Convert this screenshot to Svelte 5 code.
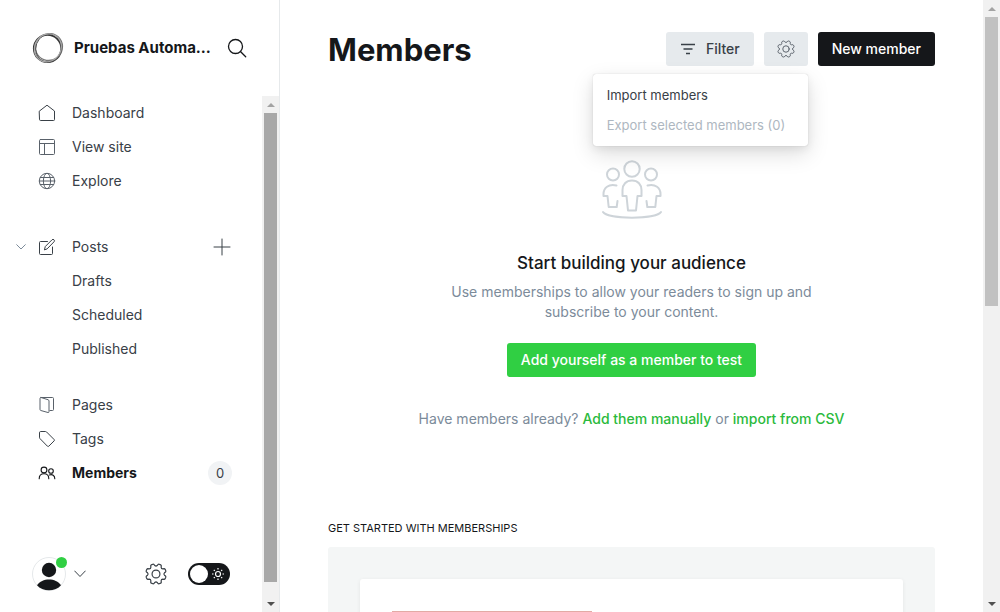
<script>
  const teeth = 8;
  const point = (radius, degrees) => {
    const angle = (degrees * Math.PI) / 180;
    return `${(12 + radius * Math.sin(angle)).toFixed(2)} ${(12 - radius * Math.cos(angle)).toFixed(2)}`;
  };
  const gearPath =
    Array.from({ length: teeth }, (_, i) => {
      const a = i * 45;
      return `${i ? 'L' : 'M'}${point(9.3, a - 8)} Q${point(8, a)} ${point(9.3, a + 8)} L${point(10.6, a + 12)} Q${point(11.2, a + 14)} ${point(11.2, a + 18)} L${point(11.2, a + 27)} Q${point(11.2, a + 31)} ${point(10.6, a + 33)}`;
    }).join(' ') + 'Z';

  const sections = [
    [
      { label: 'Dashboard', icon: 'home' },
      { label: 'View site', icon: 'layout' },
      { label: 'Explore', icon: 'globe' }
    ],
    [
      { label: 'Posts', icon: 'edit', expandable: true },
      { label: 'Drafts' },
      { label: 'Scheduled' },
      { label: 'Published' }
    ],
    [
      { label: 'Pages', icon: 'pages' },
      { label: 'Tags', icon: 'tag' },
      { label: 'Members', icon: 'members', active: true, count: 0 }
    ]
  ];
  let night = $state(false);
</script>

{#snippet gear(size)}
  <svg width={size} height={size} viewBox="0 0 24 24" class="line gear" aria-hidden="true">
    <path d={gearPath} /><circle cx="12" cy="12" r="4.3" />
  </svg>
{/snippet}

{#snippet navIcon(name)}
  <svg width="18" height="18" viewBox="0 0 18 18" class="line {name}" aria-hidden="true">
    {#if name === 'home'}
      <path d="M1.5 7 9 1.2 16.5 7v8.6q0 .9-.9.9H2.4q-.9 0-.9-.9z" />
    {:else if name === 'layout'}
      <rect x="1.5" y="1.5" width="15" height="15" rx="1" /><path d="M1.5 5.5h15M6.5 5.5v11" />
    {:else if name === 'globe'}
      <circle cx="9" cy="9" r="7.7" /><ellipse cx="9" cy="9" rx="3.6" ry="7.7" /><path d="M2.3 5.5h13.4M1.3 9h15.4M2.3 12.5h13.4" />
    {:else if name === 'edit'}
      <path d="M9.5 3.5h-7q-1 0-1 1v11q0 1 1 1h11q1 0 1-1V9" /><path d="m6.500 11.500.8-3L14 1.800q1-1 2 0t0 2L9.400 10.600z" />
    {:else if name === 'pages'}
      <path d="M3 1.500h11.500q1 0 1 1v11q0 1-1 1H12M3 1.500q-1 0-1 1v11q0 .8.800 1l7.200 2q1 .2 1-.8V5q0-1-1-1.300L3 1.500" />
    {:else if name === 'tag'}
      <path d="M1.500 2.500q0-1 1-1h5q.6 0 1 .4l7.600 7.600q.7.700 0 1.400l-5.300 5.300q-.7.700-1.400 0L1.900 8.500q-.4-.4-.4-1z" />
    {:else}
      <circle cx="6" cy="6" r="2.9" /><circle cx="13" cy="7" r="2.3" /><path d="M1.200 14.700c0-3 1.900-5 4.800-5s4.800 2 4.800 5M11.300 11c3-1.200 5.500.5 5.500 3.700" />
    {/if}
  </svg>
{/snippet}

<div class="app">
  <aside>
    <header class="brand">
      <svg width="32" height="32" viewBox="0 0 32 32" fill="none" aria-hidden="true">
        <circle cx="15.5" cy="16.5" r="13.7" stroke="#333" stroke-width="1.8" />
        <ellipse cx="17" cy="15.3" rx="13.7" ry="13.3" stroke="#777" stroke-width="1.3" transform="rotate(-35 16.5 15.3)" />
        <ellipse cx="16.7" cy="16" rx="12.8" ry="14.4" stroke="#555" stroke-width=".9" transform="rotate(20 16.7 16)" />
        <ellipse cx="16.5" cy="16" rx="14.5" ry="13" stroke="#aaa" stroke-width="1.2" transform="rotate(-55 16 16.5)" />
      </svg>
      <strong>Pruebas Automa...</strong>
      <button class="plain" aria-label="Search">
        <svg width="20" height="20" viewBox="0 0 20 20" class="line dark" aria-hidden="true"><circle cx="8.5" cy="8.5" r="7" /><path d="m13.7 13.7 5 5" /></svg>
      </button>
    </header>
    <div class="side-body">
      <div class="side-content">
        <nav>
          {#each sections as items}
            <ul>
              {#each items as item}
                <li>
                  <span class="toggle">
                    {#if item.expandable}
                      <button class="plain" aria-label="Collapse posts"><svg width="10" height="6" viewBox="0 0 10 6" class="line pale" aria-hidden="true"><path d="m.7.7 4.3 4.3L9.3.7" /></svg></button>
                    {/if}
                  </span>
                  <a href="#{item.label}" class:active={item.active}>
                    <span class="icon">{#if item.icon}{@render navIcon(item.icon)}{/if}</span>
                    {item.label}
                  </a>
                  {#if item.expandable}
                    <button class="plain" aria-label="New post"><svg width="20" height="20" viewBox="0 0 20 20" class="line" aria-hidden="true"><path d="M10 2v16M2 10h16" /></svg></button>
                  {/if}
                  {#if item.active}<span class="count">{item.count}</span>{/if}
                </li>
              {/each}
            </ul>
          {/each}
        </nav>
        <footer>
          <button class="plain account" aria-label="Account">
            <span class="avatar">
              <svg width="34" height="34" viewBox="0 0 34 34" aria-hidden="true"><circle cx="17" cy="17" r="16.5" fill="#fff" stroke="#e5e8ea" /><circle cx="17" cy="13" r="7.2" fill="#15171a" /><path d="M5 28.300c5-7.700 19-7.700 24 0-5.500 6.600-18.500 6.600-24 0z" fill="#15171a" /></svg>
              <i></i>
            </span>
            <svg width="12" height="8" viewBox="0 0 12 8" class="line" aria-hidden="true"><path d="m.7 1 5.300 5.500L11.300 1" /></svg>
          </button>
          <button class="plain settings" aria-label="Settings">{@render gear(22)}</button>
          <label class="switch">
            <input type="checkbox" bind:checked={night} aria-label="Night mode" />
            <svg width="14" height="14" viewBox="0 0 14 14" aria-hidden="true"><circle cx="7" cy="7" r="2.500" /><path d="M7 1v1.500M7 11.500V13M1 7h1.500M11.500 7H13M2.800 2.800l1 1M10.200 10.200l1 1M11.200 2.800l-1 1M3.800 10.200l-1 1" /></svg>
          </label>
        </footer>
      </div>
      <div class="scrollbar side-scroll" aria-hidden="true"><b class="up"></b><span></span><b class="down"></b></div>
    </div>
  </aside>

  <main>
    <header class="top">
      <h1>Members</h1>
      <div class="actions">
        <button class="btn gray"><svg width="16" height="12" viewBox="0 0 16 12" class="bars" aria-hidden="true"><path d="M1 1.500h14M3.500 6h9M6 10.500h4" /></svg>Filter</button>
        <div class="menu-wrap">
          <button class="btn gray" aria-label="Member actions">{@render gear(18)}</button>
          <div class="menu">
            <button>Import members</button>
            <button disabled>Export selected members (0)</button>
          </div>
        </div>
        <button class="btn black">New member</button>
      </div>
    </header>
    <section class="empty">
      <svg width="60" height="60" viewBox="0 0 60 60" class="people" aria-hidden="true">
        <circle cx="30" cy="9" r="7.7" /><circle cx="11" cy="14.5" r="6" /><circle cx="49" cy="14.5" r="6" />
        <path d="M30 20.500c-6 0-9.500 4-9.500 9.500v6h4l1.500 14.500h8L35.500 36h4v-6c0-5.500-3.500-9.500-9.500-9.500z" />
        <path d="M14.500 25.500C6.500 23.500 1.500 28 1.500 34v2h4l1.200 11h8l.8-6M45.500 25.500c8-2 13 2.500 13 8.500v2h-4l-1.200 11h-8l-.8-6" />
        <path d="M1 52c5 7.500 53 7.500 58 0" />
      </svg>
      <h2>Start building your audience</h2>
      <p>Use memberships to allow your readers to sign up and subscribe to your content.</p>
      <button class="btn green">Add yourself as a member to test</button>
      <p class="already">Have members already? <a href="#new">Add them manually</a> or <a href="#import">import from CSV</a></p>
    </section>
    <section>
      <h3>GET STARTED WITH MEMBERSHIPS</h3>
      <div class="panel"><article><div class="cover"></div></article></div>
    </section>
  </main>
  <div class="scrollbar page-scroll" aria-hidden="true"><b class="up"></b><span></span><em></em><b class="down"></b></div>
</div>

<style>
  :global(body) { margin: 0; background: #fff; }
  .app, .app * { box-sizing: border-box; }
  .app { display: flex; height: 100vh; overflow: hidden; color: #394047; font: 400 14px/20px Inter, sans-serif; }
  button { font: inherit; color: inherit; border: 0; cursor: pointer; }
  a { color: inherit; text-decoration: none; }
  svg { display: block; flex: none; }
  .plain { display: flex; padding: 0; background: none; }
  .line { fill: none; stroke: #394047; stroke-width: 1; stroke-linejoin: round; stroke-linecap: round; }
  .gear { stroke-width: 1.3; }
  .layout, .globe, .pages { stroke: #59616a; }
  .members { stroke: #15171a; stroke-width: 1.1; }
  .dark { stroke: #15171a; stroke-width: 1.3; }
  .pale { stroke: #7c8b9a; }

  aside { display: flex; flex-direction: column; flex: 0 0 280px; min-width: 0; border-right: 1px solid #e6e9eb; }
  .brand { display: flex; align-items: center; flex: 0 0 96px; padding: 0 32px; }
  .brand strong { flex: 1; min-width: 0; margin-left: 10px; white-space: nowrap; color: #15171a; font-size: 15px; font-weight: 700; }
  .side-body { display: flex; flex: 1; min-height: 0; }
  .side-content { display: flex; flex-direction: column; justify-content: space-between; flex: 1; min-width: 0; }
  ul { margin: 0 0 32px; padding: 0; list-style: none; }
  ul:nth-child(2) { margin-bottom: 22px; }
  li { display: flex; align-items: center; height: 34px; padding-right: 30px; }
  .toggle { display: flex; justify-content: flex-end; width: 26px; }
  li a { display: flex; align-items: center; flex: 1; margin-left: 12px; }
  .icon { width: 34px; }
  .active { color: #15171a; font-weight: 700; }
  .count { min-width: 24px; border-radius: 12px; background: #f1f3f5; font-size: 13px; line-height: 24px; text-align: center; }
  footer { display: flex; align-items: center; padding: 0 32px 21px; }
  .account { align-items: center; gap: 8px; }
  .avatar { position: relative; }
  .avatar i { position: absolute; top: 0; right: -1px; width: 11px; height: 11px; border-radius: 50%; background: #30cf43; }
  .settings { margin: 0 21px 0 auto; }
  .switch { display: flex; align-items: center; justify-content: flex-end; width: 42px; height: 22px; padding-right: 5px; border-radius: 11px; background: #15171a; }
  .switch input { appearance: none; width: 18px; height: 18px; margin: 0 auto 0 2px; border-radius: 50%; background: #fff; }
  .switch svg { fill: none; stroke: #fff; stroke-width: 1.2; }

  .scrollbar { display: flex; flex-direction: column; flex: 0 0 17px; background: #f1f1f1; }
  .scrollbar span { flex: 1; margin: 0 2px; background: #a8a8a8; }
  .scrollbar b { display: flex; align-items: center; justify-content: center; flex: 0 0 17px; }
  .scrollbar b::after { content: ''; border: 4px solid transparent; }
  .scrollbar .up::after { border-top-width: 0; border-bottom-color: #a3a3a3; }
  .scrollbar .down::after { border-bottom-width: 0; border-top-color: #505050; }
  .side-scroll span { margin-bottom: 13px; }
  .page-scroll span { background: #c1c1c1; }
  .page-scroll em { flex: 1; }

  main { flex: 1; min-width: 0; padding: 0 48px; overflow: hidden; }
  .top { display: flex; align-items: flex-start; justify-content: space-between; padding: 32px 0 28px; }
  h1 { margin: 0; color: #15171a; font-size: 31px; font-weight: 700; line-height: 36px; }
  .actions { display: flex; gap: 10px; }
  .btn { display: flex; align-items: center; justify-content: center; height: 34px; padding: 0 14px; border-radius: 3px; font-weight: 500; white-space: nowrap; }
  .gray { background: #e6eaed; }
  .bars { margin-right: 10px; fill: none; stroke: #394047; stroke-width: 1.5; }
  .menu-wrap { position: relative; }
  .menu-wrap .btn { width: 44px; padding: 0; }
  .menu-wrap .gear { stroke: #59616a; }
  .black { background: #15171a; color: #fff; }
  .menu { position: absolute; z-index: 1; top: 42px; right: 0; width: 215px; padding: 6px 0; border-radius: 3px; background: #fff; box-shadow: 0 0 1px #0004, 0 8px 22px #0002, 0 3px 8px #0001; }
  .menu button { display: block; width: 100%; height: 30px; padding: 0 14px; background: none; font-size: 13px; text-align: left; white-space: nowrap; }
  .menu button:disabled { color: #aeb7c1; }
  .empty { display: flex; flex-direction: column; align-items: center; padding-top: 64px; text-align: center; }
  .people { fill: none; stroke: #ced4d9; stroke-width: 2; stroke-linejoin: round; stroke-linecap: round; }
  h2 { margin: 31px 0 7px; color: #15171a; font-size: 17px; font-weight: 500; line-height: 24px; }
  p { max-width: 400px; margin: 0; color: #7c8b9a; }
  .green { margin: 21px 0 32px; background: #30cf43; color: #fff; }
  .already { max-width: none; }
  .already a { color: #2bba3c; font-weight: 500; }
  h3 { margin: 91px 0 11px; color: #15171a; font-size: 11px; font-weight: 400; line-height: 16px; }
  .panel { padding: 32px; border-radius: 3px; background: #f4f6f6; }
  article { padding: 32px; border-radius: 3px; background: #fff; box-shadow: 0 1px 4px #00000012; }
  .cover { width: 200px; height: 120px; background: #e3aaa5; }
</style>
